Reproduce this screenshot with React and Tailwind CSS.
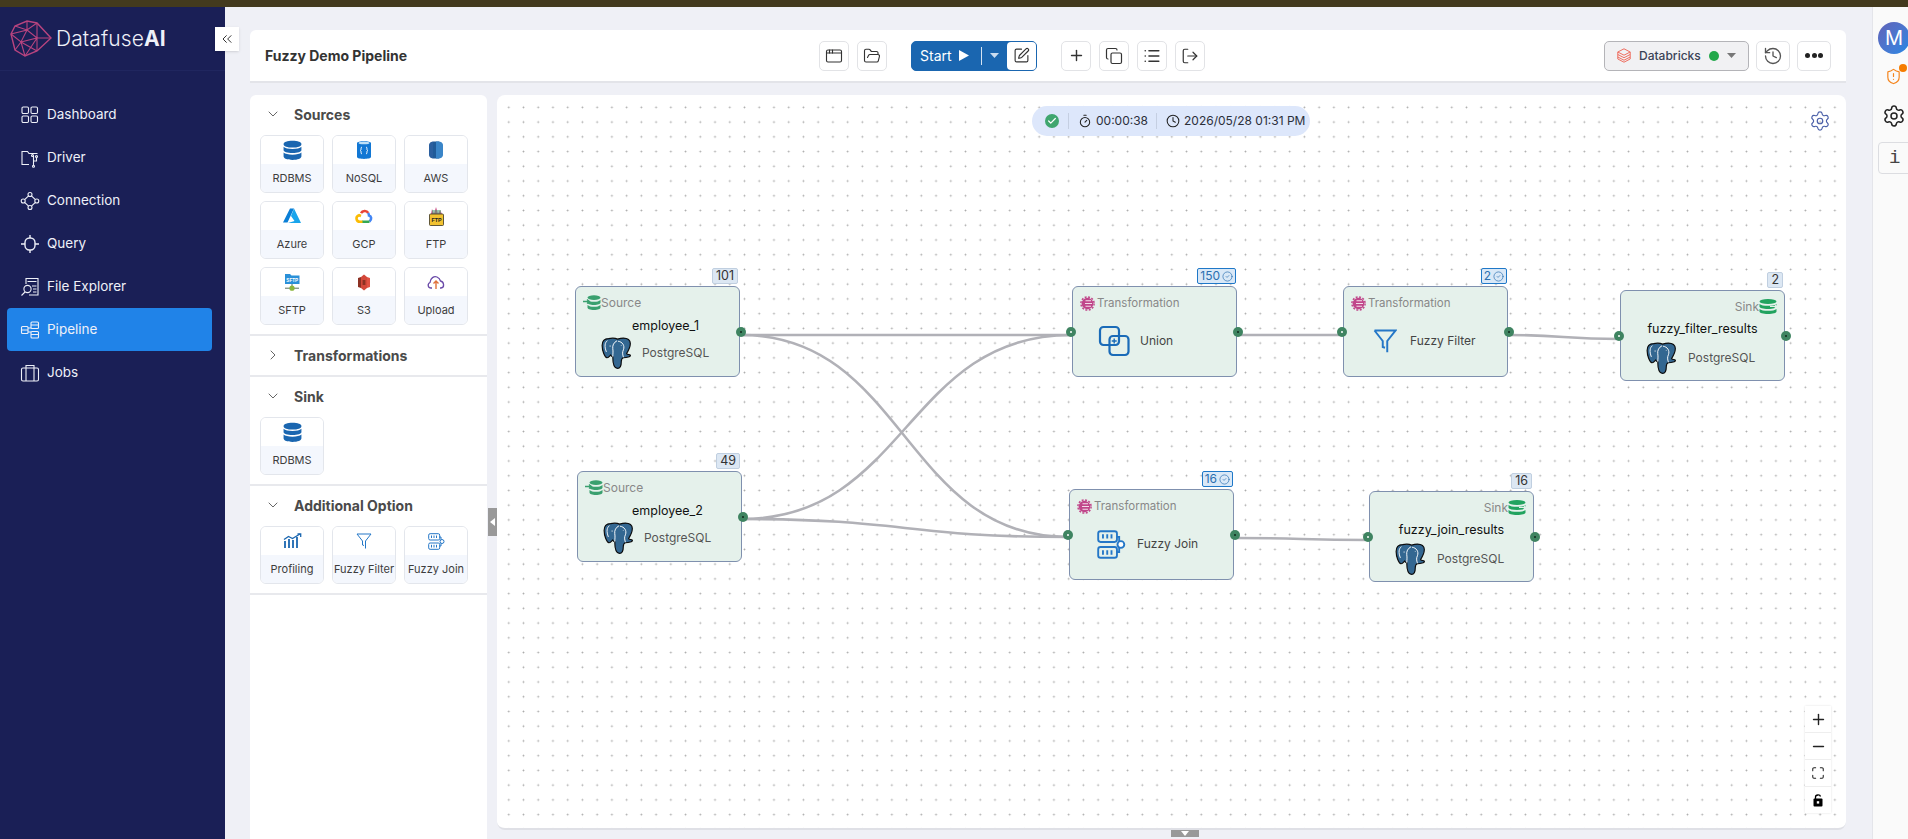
import React from "react";
import {
  ChevronsLeft, ChevronDown, ChevronRight, AppWindow, FolderOpen, SquarePen, Plus, Copy, List, LogOut,
  History, ShieldAlert, Settings, Timer, Clock, Check, Minus, Maximize, CircleCheck,
} from "lucide-react";

const BLUE = "#1a66b0";

// ---------- small drawn icons ----------
function Logo() {
  const c = "#b8447f";
  return (
    <svg width="42" height="38" viewBox="0 0 42 38" fill="none" stroke={c} strokeWidth="1.1">
      <path d="M1 14L5 6L17 1L27 3L41 18L27 31L15 36L5 30Z" strokeWidth="1.4" />
      <path d="M5 6L17 10L27 3M17 1L17 10L1 14M17 10L27 18L41 18M17 10L11 22L1 14M11 22L27 18L27 31M11 22L15 36M11 22L5 30M27 3L27 18M27 18L15 36M11 22L27 31" />
    </svg>
  );
}

const navIcons = {
  dashboard: (
    <>
      <rect x="2" y="2" width="6.5" height="6.5" rx="1.2" />
      <rect x="11" y="2" width="6.5" height="6.5" rx="1.2" />
      <rect x="2" y="11" width="6.5" height="6.5" rx="1.2" />
      <rect x="11" y="11" width="6.5" height="6.5" rx="1.2" />
    </>
  ),
  driver: (
    <>
      <path d="M9 16.5H2V3.5H7.5L9 5.5H17.5" />
      <path d="M13.5 8V18M13.5 13H16.5V9.5" />
      <circle cx="13.5" cy="18.2" r="1" />
      <circle cx="16.5" cy="8.5" r="1" />
      <circle cx="12.5" cy="7.5" r="1" />
    </>
  ),
  connection: (
    <>
      <circle cx="10" cy="3.5" r="2" />
      <circle cx="10" cy="16.5" r="2" />
      <circle cx="3.2" cy="10" r="2" />
      <circle cx="16.8" cy="10" r="2" />
      <path d="M8.6 4.9L4.6 8.6M11.4 4.9L15.4 8.6M4.6 11.4L8.6 15.1M15.4 11.4L11.4 15.1" />
    </>
  ),
  query: (
    <>
      <rect x="5" y="4" width="10" height="12" rx="4.5" strokeWidth="1.4" />
      <path d="M10 1V4M10 16V19M1 10H5M15 10H19" strokeWidth="1.4" />
    </>
  ),
  files: (
    <>
      <path d="M6 7V1.5H18V18H9" />
      <path d="M7.5 4.5H16.5M12 9H16.5M13 12H16.5M13 15H16.5" />
      <circle cx="7.5" cy="12" r="3.6" />
      <path d="M5 15L1.5 18.5" />
    </>
  ),
  pipeline: (
    <>
      <rect x="1.5" y="6.5" width="6.5" height="7" rx="1" />
      <rect x="11" y="2" width="7.5" height="6.5" rx="1" />
      <rect x="11" y="11.5" width="7.5" height="6.5" rx="1" />
      <path d="M1.5 10H8M11 5H18.5M11 14.5H18.5M8 8H11M8 12H11" />
    </>
  ),
  jobs: (
    <>
      <rect x="1.5" y="5" width="17" height="13" rx="1.5" />
      <path d="M6 5V18M14 5V18M6 5V2.5H14V5" />
    </>
  ),
};

function NavIcon({ name }) {
  return (
    <svg width="20" height="20" viewBox="0 0 20 20" fill="none" stroke="currentColor" strokeWidth="1.1">
      {navIcons[name]}
    </svg>
  );
}

function DbStack({ color = BLUE, size = 20 }) {
  return (
    <svg width={size} height={size} viewBox="0 0 20 20" fill={color}>
      <path d="M1.5 4C1.5 2 5 .8 10 .8S18.5 2 18.5 4 15 7.2 10 7.2 1.5 6 1.5 4Z" />
      <path d="M1.5 6.5C3 8 6 8.6 10 8.6S17 8 18.5 6.5V9.5C18.5 11.2 15 12.4 10 12.4S1.5 11.2 1.5 9.5Z" />
      <path d="M1.5 12C3 13.4 6 14 10 14S17 13.4 18.5 12V15.5C18.5 17.6 15 19 10 19S1.5 17.6 1.5 15.5Z" />
    </svg>
  );
}

function NoSqlIcon() {
  return (
    <svg width="16" height="20" viewBox="0 0 16 20">
      <path d="M1 3C1 .5 15 .5 15 3V17C15 19.5 1 19.5 1 17Z" fill="#1177d4" />
      <ellipse cx="8" cy="3" rx="5.5" ry="1.3" fill="#bfe0f7" />
      <path d="M6 7C4.5 7 5.5 10 4.5 10.5C5.5 11 4.5 14 6 14M10 7C11.5 7 10.5 10 11.5 10.5C10.5 11 11.5 14 10 14" fill="none" stroke="#fff" strokeWidth="1" />
    </svg>
  );
}

function AwsIcon() {
  return (
    <svg width="16" height="18" viewBox="0 0 16 18">
      <path d="M1 4C1 1.5 4 .5 5 .5V17.5C4 17.5 1 16.5 1 14Z" fill="#2b5f9f" />
      <path d="M5 .5H11V17.5H5Z" fill="#205b99" />
      <path d="M8 .5H11C12 .5 15 1.5 15 4V14C15 16.5 12 17.5 11 17.5H8Z" fill="#3a85c8" />
    </svg>
  );
}

function AzureIcon() {
  return (
    <svg width="18" height="16" viewBox="0 0 18 16">
      <path d="M7 0.5H11L4.5 14.5H0Z" fill="#0a7fd6" />
      <path d="M11 0.5L18 15H5L11.5 13L8 8Z" fill="#19a5ec" />
    </svg>
  );
}

function GcpIcon() {
  return (
    <svg width="18" height="15" viewBox="0 0 18 15" fill="none" strokeWidth="2.6">
      <path d="M6 4.2C7.5 1.5 11.5 1 13.2 4" stroke="#ea4335" />
      <path d="M13.2 4C14 5.5 14 6 14 6.5C16.5 7 17 10.5 14.5 12.5" stroke="#4285f4" />
      <path d="M14.5 12.8H7" stroke="#34a853" />
      <path d="M7.5 12.8H5C1 12.8 0.2 7.5 4 6.2L6 7" stroke="#fbbc05" />
    </svg>
  );
}

function FtpIcon() {
  return (
    <svg width="15" height="19" viewBox="0 0 15 19">
      <path d="M3 2L5 7H2ZM7 0L9 7H5ZM11 3L13 7H9Z" fill="#c94f86" />
      <rect x="3" y="3" width="9" height="5" fill="#58a27c" opacity=".6" />
      <rect x="0.5" y="7" width="14" height="11.5" rx="1" fill="#f2c230" stroke="#3a3320" strokeWidth=".8" />
      <text x="7.5" y="15" fontSize="5.4" fontWeight="700" textAnchor="middle" fontFamily="Liberation Sans, sans-serif" fill="#222">FTP</text>
    </svg>
  );
}

function SftpIcon() {
  return (
    <svg width="16" height="19" viewBox="0 0 16 19">
      <path d="M1 1H6L7.5 2.5H15.5V11H1Z" fill="#2a90d8" />
      <text x="8.2" y="8.6" fontSize="4.6" fontWeight="700" textAnchor="middle" fontFamily="Liberation Sans, sans-serif" fill="#fff">SFTP</text>
      <path d="M8 11V14M1 15.2H15" stroke="#58705f" strokeWidth="1" />
      <circle cx="8" cy="15.2" r="2.6" fill="#8cb63c" />
    </svg>
  );
}

function S3Icon() {
  return (
    <svg width="14" height="17" viewBox="0 0 14 17">
      <path d="M1 4L4 3V14L1 13Z" fill="#8c3123" />
      <path d="M13 4L10 3V14L13 13Z" fill="#e05243" />
      <path d="M4 3L7 .5L10 3V14L7 16.5L4 14Z" fill="#d3483a" />
      <rect x="5.6" y="6" width="2.8" height="5" fill="#8c3123" />
    </svg>
  );
}

function UploadIcon() {
  return (
    <svg width="18" height="15" viewBox="0 0 18 15" fill="none" strokeWidth="1.3">
      <path d="M5 13H4C1 13 0 9 3 7.5C3.4 3 7 .8 10 2C12 2.8 13 4 13.5 6C17 6.5 18 12.5 14 13H13" stroke="#6a4aa8" />
      <path d="M9 14V6M6.5 8.5L9 6L11.5 8.5" stroke="#e0713a" strokeWidth="1.4" />
    </svg>
  );
}

function ProfilingIcon() {
  return (
    <svg width="19" height="16" viewBox="0 0 19 16" fill="none" stroke={BLUE} strokeWidth="1.3">
      <path d="M2 15V8M6 15V6M10 15V7M14 15V4" strokeWidth="1.8" />
      <path d="M1 6.5L5.5 3.5L9.5 5.5L17 1" />
      <path d="M14.5 1H17.7V4" />
    </svg>
  );
}

function JoinIcon({ size = 17, w = 1 }) {
  return (
    <svg width={size} height={size} viewBox="0 0 17 17" fill="none" stroke="#2477c7" strokeWidth={w}>
      <rect x="0.7" y="0.7" width="11" height="6.3" rx="1.4" />
      <rect x="0.7" y="10" width="11" height="6.3" rx="1.4" />
      <path d="M3.5 2.5V5M6 2.5V5M8.5 2.5V5M3.5 11.8V14.5M6 11.8V14.5M8.5 11.8V14.5M11.7 4H13V13H11.7" />
      <circle cx="14" cy="8.5" r="2" fill="#fff" />
    </svg>
  );
}

function FunnelLine({ size = 16, w = 1 }) {
  return (
    <svg width={size} height={size} viewBox="0 0 16 16" fill="none" stroke="#2477c7" strokeWidth={w}>
      <path d="M1 1H15L9.5 8V15.5M1 1L6.5 8V12L8 12.5" />
    </svg>
  );
}

// postgres elephant
function Elephant() {
  return (
    <svg width="31" height="33" viewBox="0 0 29 31">
      <path d="M7 1.5C3 1.5 1 4 1 8C1 13 3.5 19 5.5 19.5C7 19.8 8 18 9 17C9.5 18 10 18.5 11 18.5C11 23 11.5 29.5 15.5 29.5C19 29.5 19 26 19 23C19 21 19.5 20 21 19.5C24 19.5 28 18.5 27.5 17C26.5 16 24.5 17 24 15.5C25.5 13 27.5 9 27.5 6C27.5 3 25 1 21 1C18.5 1 17 1.5 15.5 2C13 .8 10 .9 7 1.5Z" fill="#336791" stroke="#0d0d0d" strokeWidth="1.1" />
      <path d="M6 3.5C3.5 5 3 9 5 14M15 3.5C12 5 10.5 8 11 11C11.5 14 11 16 11 18.5M16 4C20 4.5 22.5 8 21 12C20 14 20 16 21 19M8.5 9V8M19 8V7.5" fill="none" stroke="#fff" strokeWidth=".9" />
    </svg>
  );
}

function UnionIcon() {
  return (
    <svg width="32" height="32" viewBox="0 0 32 32" fill="none" stroke="#1a6bb8" strokeWidth="2.2">
      <rect x="2" y="2" width="19" height="18" rx="3.5" />
      <rect x="11.5" y="11" width="19" height="19" rx="3.5" />
      <path d="M16.2 13.5V18.5M13.7 16H18.7" strokeWidth="1.4" />
    </svg>
  );
}

function SourceGlyph() {
  return (
    <svg width="18" height="15" viewBox="0 0 18 15" fill="#3aa06f">
      <ellipse cx="11" cy="2.6" rx="6.5" ry="2.4" />
      <path d="M4.5 5C6 6.4 8 6.8 11 6.8S16 6.4 17.5 5V7.5C17.5 9 15 10 11 10S4.5 9 4.5 7.5Z" />
      <path d="M4.5 10C6 11.4 8 11.8 11 11.8S16 11.4 17.5 10V12.5C17.5 14 15 15 11 15S4.5 14 4.5 12.5Z" />
      <path d="M0 6.5H6M4 4.5L6.5 6.5L4 8.5" fill="none" stroke="#3aa06f" strokeWidth="1.3" />
    </svg>
  );
}

function SinkGlyph() {
  return (
    <svg width="18" height="15" viewBox="0 0 18 15" fill="#22a35f">
      <ellipse cx="9" cy="2.6" rx="8.5" ry="2.5" />
      <path d="M.5 5C2 6.4 5 6.8 9 6.8S16 6.4 17.5 5V7.5C17.5 9 14 10 9 10S.5 9 .5 7.5Z" />
      <path d="M.5 10C2 11.4 5 11.8 9 11.8S16 11.4 17.5 10V12.5C17.5 14 14 15 9 15S.5 14 .5 12.5Z" />
      <path d="M11 7.5H17.5M15.5 5.5L18 7.5L15.5 9.5" fill="none" stroke="#e5f1eb" strokeWidth="1.2" />
    </svg>
  );
}

function TransformGlyph() {
  return (
    <svg width="15" height="15" viewBox="0 0 15 15" fill="none">
      <circle cx="7.5" cy="7.5" r="5.8" fill="#c0468a" />
      <circle cx="7.5" cy="7.5" r="6.6" stroke="#c0468a" strokeWidth="1.5" strokeDasharray="2 1.5" />
      <path d="M5.5 4.8H11M5 7.5H12M5.5 10.2H11" stroke="#f3dce9" strokeWidth="1.1" />
    </svg>
  );
}

function DatabricksIcon() {
  return (
    <svg width="14" height="15" viewBox="0 0 14 15" fill="none" stroke="#ee6d5f" strokeWidth="1">
      <path d="M7 .8L13.2 4L7 7.2L.8 4Z" />
      <path d="M.8 6.5L7 9.7L13.2 6.5M.8 9L7 12.2L13.2 9M.8 11L7 14.2L13.2 11" />
      <path d="M.8 4V11M13.2 4V11" />
    </svg>
  );
}

// ---------- data ----------
const navItems = [
  ["dashboard", "Dashboard"],
  ["driver", "Driver"],
  ["connection", "Connection"],
  ["query", "Query"],
  ["files", "File Explorer"],
  ["pipeline", "Pipeline"],
  ["jobs", "Jobs"],
];

const sourceCards = [
  ["RDBMS", <DbStack size={21} />],
  ["NoSQL", <NoSqlIcon />],
  ["AWS", <AwsIcon />],
  ["Azure", <AzureIcon />],
  ["GCP", <GcpIcon />],
  ["FTP", <FtpIcon />],
  ["SFTP", <SftpIcon />],
  ["S3", <S3Icon />],
  ["Upload", <UploadIcon />],
];

const optionCards = [
  ["Profiling", <ProfilingIcon />],
  ["Fuzzy Filter", <FunnelLine />],
  ["Fuzzy Join", <JoinIcon />],
];

// positions are canvas coordinates
const nodes = [
  { kind: "source", x: 78, y: 191, name: "employee_1", count: "101" },
  { kind: "source", x: 80, y: 376, name: "employee_2", count: "49" },
  { kind: "transform", x: 575, y: 191, name: "Union", count: "150", icon: <UnionIcon />, ml: "ml-[25px]", gap: "gap-[10px]" },
  { kind: "transform", x: 846, y: 191, name: "Fuzzy Filter", count: "2", icon: <FunnelLine size={24} w={1.3} />, ml: "ml-[29px]", gap: "gap-[13px]" },
  { kind: "transform", x: 572, y: 394, name: "Fuzzy Join", count: "16", icon: <JoinIcon size={29} w={1.1} />, ml: "ml-[27px]", gap: "gap-[11px]" },
  { kind: "sink", x: 1123, y: 195, name: "fuzzy_filter_results", count: "2" },
  { kind: "sink", x: 872, y: 396, name: "fuzzy_join_results", count: "16" },
];

const edges = [
  [244, 240, 574, 240],
  [244, 240, 571, 442],
  [245, 424, 574, 240],
  [245, 424, 571, 442],
  [740, 240, 844, 240],
  [1011, 240, 1122, 244],
  [738, 443, 871, 445],
];

// ---------- pieces ----------
function Sidebar() {
  return (
    <aside className="w-[225px] shrink-0 bg-[#1a1f56] text-[#eef0f8] relative">
      <div className="h-[64px] flex items-center pl-[10px] gap-[4px] border-b border-[#20265f]">
        <Logo />
        <span className="text-[21px] tracking-[0.1px] font-light">
          Datafuse<span className="font-bold">AI</span>
        </span>
      </div>
      <nav className="pt-[22px] pl-[7px] w-[212px]">
        {navItems.map(([icon, label]) => (
          <div
            key={icon}
            className={`h-[43px] flex items-center pl-[13px] gap-[7px] rounded text-[13.5px] ${
              label === "Pipeline" ? "bg-[#2083e8]" : ""
            }`}
          >
            <NavIcon name={icon} />
            {label}
          </div>
        ))}
      </nav>
      <button className="absolute left-[215px] top-[20px] w-[24px] h-[24px] bg-white shadow flex items-center justify-center text-[#333]">
        <ChevronsLeft size={16} strokeWidth={1.5} />
      </button>
    </aside>
  );
}

function ToolButton({ children }) {
  return (
    <button className="w-[30px] h-[30px] border border-[#e2e3e6] rounded-[5px] flex items-center justify-center text-[#333] bg-white">
      {children}
    </button>
  );
}

function Header() {
  return (
    <header className="h-[53px] shrink-0 bg-white rounded-t-md border-b-2 border-[#e3e4e9] flex items-center pl-[15px] pr-[15px]">
      <div className="w-[554px] text-[14px] font-bold text-[#333]">Fuzzy Demo Pipeline</div>
      <div className="flex gap-[8px]">
        <ToolButton><AppWindow size={18} strokeWidth={1.5} /></ToolButton>
        <ToolButton><FolderOpen size={18} strokeWidth={1.5} /></ToolButton>
      </div>
      <div className="ml-[24px] w-[126px] h-[30px] bg-[#1a66b0] rounded-[5px] flex items-center text-white text-[14px] overflow-hidden border border-[#1a66b0]">
        <span className="pl-[8px] w-[47px]">Start</span>
        <svg width="10" height="11" viewBox="0 0 10 11" fill="white"><path d="M0 0L10 5.5L0 11Z" /></svg>
        <span className="ml-[12px] w-px h-[18px] bg-[#d5e3f2]" />
        <svg className="ml-[8px]" width="9" height="5" viewBox="0 0 9 5" fill="#c9dcf0"><path d="M0 0H9L4.5 5Z" /></svg>
        <span className="ml-auto w-[29px] h-full bg-white rounded-l-[4px] flex items-center justify-center text-[#333]">
          <SquarePen size={17} strokeWidth={1.6} />
        </span>
      </div>
      <div className="ml-[24px] flex gap-[8px]">
        <ToolButton><Plus size={17} strokeWidth={2} /></ToolButton>
        <ToolButton><Copy size={18} strokeWidth={1.6} /></ToolButton>
        <ToolButton><List size={18} strokeWidth={2.2} /></ToolButton>
        <ToolButton><LogOut size={18} strokeWidth={1.6} /></ToolButton>
      </div>
      <div className="ml-auto flex items-center gap-[7px]">
        <div className="w-[145px] h-[30px] bg-[#f1f1f3] border border-[#b4b4b8] rounded-[5px] flex items-center pl-[12px] text-[12px] text-[#3a4256] font-medium">
          <DatabricksIcon />
          <span className="ml-[8px]">Databricks</span>
          <span className="ml-[8px] w-[10px] h-[10px] rounded-full bg-[#22a84a]" />
          <svg className="ml-[8px]" width="9" height="5" viewBox="0 0 9 5" fill="#777"><path d="M0 0H9L4.5 5Z" /></svg>
        </div>
        <button className="w-[34px] h-[30px] border border-[#e2e3e6] rounded-[5px] flex items-center justify-center text-[#555]">
          <History size={20} strokeWidth={1.6} />
        </button>
        <button className="w-[34px] h-[30px] border border-[#e2e3e6] rounded-[5px] flex items-center justify-center gap-[1.5px]">
          <span className="w-[5px] h-[5px] rounded-full bg-[#222]" />
          <span className="w-[5px] h-[5px] rounded-full bg-[#222]" />
          <span className="w-[5px] h-[5px] rounded-full bg-[#222]" />
        </button>
      </div>
    </header>
  );
}

function Card({ label, icon }) {
  return (
    <div className="w-[64px] h-[58px] border border-[#e3e6ec] rounded-[6px] overflow-hidden flex flex-col">
      <div className="h-[28px] flex items-center justify-center bg-white">{icon}</div>
      <div className="flex-1 bg-[#f4f7fd] flex items-center justify-center text-[11px] text-[#3d3d3d] whitespace-nowrap">
        {label}
      </div>
    </div>
  );
}

function Section({ title, open = true, cards = [], height }) {
  return (
    <section className={`border-b-2 border-[#e8e9ed] px-[10px] ${height}`}>
      <div className="h-[40px] pb-[2px] flex items-center text-[14px] font-bold text-[#4a4a4a]">
        {open ? (
          <ChevronDown size={16} strokeWidth={1.5} className="ml-[5px] text-[#666]" />
        ) : (
          <ChevronRight size={16} strokeWidth={1.5} className="ml-[5px] text-[#666]" />
        )}
        <span className="ml-[13px]">{title}</span>
      </div>
      {cards.length > 0 && (
        <div className="grid grid-cols-[64px_64px_64px] gap-x-[8px] gap-y-[8px]">
          {cards.map(([label, icon]) => (
            <Card key={label} label={label} icon={icon} />
          ))}
        </div>
      )}
    </section>
  );
}

function LeftPanel() {
  return (
    <div className="w-[237px] shrink-0 bg-white rounded-t-md relative">
      <Section title="Sources" cards={sourceCards} height="h-[241px]" />
      <Section title="Transformations" open={false} height="h-[41px]" />
      <Section title="Sink" cards={[["RDBMS", <DbStack size={21} />]]} height="h-[109px]" />
      <Section title="Additional Option" cards={optionCards} height="h-[109px]" />
      <div className="absolute left-[238px] top-[413px] w-[9px] h-[28px] bg-[#999] flex items-center justify-center">
        <svg width="5" height="8" viewBox="0 0 5 8" fill="#fff"><path d="M5 0V8L0 4Z" /></svg>
      </div>
    </div>
  );
}

function Port({ side, dark }) {
  return (
    <span
      className={`absolute top-1/2 -translate-y-1/2 w-[10px] h-[10px] rounded-full bg-[#3f8461] flex items-center justify-center ${
        side === "left" ? "left-[-7px]" : "right-[-7px]"
      }`}
    >
      <span className={`w-[2px] h-[2px] rounded-full ${dark ? "bg-[#10281c]" : "bg-white"}`} />
    </span>
  );
}

function Badge({ count, checked }) {
  if (checked) {
    return (
      <div className="absolute right-[0px] top-[-19px] h-[16px] px-[2px] bg-[#d9e8f7] border border-[#1f78c8] rounded-[2px] flex items-center gap-[2px] text-[12px] leading-none text-[#2a6fb0]">
        <span>{count}</span>
        <CircleCheck size={11} strokeWidth={1.5} />
      </div>
    );
  }
  return (
    <div className="absolute right-[1px] top-[-19px] h-[16px] px-[3px] bg-[#dce7f3] border border-[#c0cfe0] rounded-[2px] flex items-center text-[12.5px] leading-none text-[#333]">
      {count}
    </div>
  );
}

function FlowNode({ node }) {
  const { kind, name, count, icon, ml, gap } = node;
  return (
    <div
      className="absolute w-[165px] h-[91px] bg-[#e5f1eb] border-[1.5px] border-[#7f90ae] rounded-[6px]"
      style={{ left: node.x, top: node.y }}
    >
      <Badge count={count} checked={kind === "transform"} />
      {kind !== "source" && <Port side="left" />}
      {kind === "source" && (
        <>
          <div className="flex items-center pl-[7px] pt-[8px] text-[12px] leading-[15px] text-[#888]">
            <SourceGlyph />
            <span>Source</span>
          </div>
          <div className="text-center text-[12.5px] text-[#111] mt-[7px] pl-[16px]">{name}</div>
          <div className="flex items-center pl-[25px] gap-[10px] mt-[1px] text-[12px] text-[#555]">
            <Elephant />
            <span>PostgreSQL</span>
          </div>
        </>
      )}
      {kind === "sink" && (
        <>
          <div className="flex items-center justify-end pr-[7px] pt-[8px] text-[12px] leading-[15px] text-[#888]">
            <span>Sink</span>
            <SinkGlyph />
          </div>
          <div className="text-center text-[12.5px] text-[#111] mt-[6px]">{name}</div>
          <div className="flex items-center pl-[25px] gap-[11px] mt-[3px] text-[12px] text-[#555]">
            <Elephant />
            <span>PostgreSQL</span>
          </div>
        </>
      )}
      {kind === "transform" && (
        <>
          <div className="flex items-center gap-[2px] pl-[7px] pt-[9px] text-[11.5px] leading-[15px] text-[#888]">
            <TransformGlyph />
            <span>Transformation</span>
          </div>
          <div className={`flex items-center h-[34px] mt-[13px] text-[12px] text-[#444] ${ml} ${gap}`}>
            {icon}
            <span>{name}</span>
          </div>
        </>
      )}
      <Port side="right" dark />
    </div>
  );
}

function edgePath([x1, y1, x2, y2]) {
  const mx = (x1 + x2) / 2;
  return `M${x1} ${y1}C${mx} ${y1} ${mx} ${y2} ${x2} ${y2}`;
}

function Canvas() {
  return (
    <div className="flex-1 mb-[9px] relative rounded-lg border-b-2 border-[#dfe0e6] overflow-visible bg-white bg-[radial-gradient(circle,#a9a9a9_0.8px,transparent_1.1px)] bg-[size:14.74px_14.74px] bg-[position:4.4px_5px]">
      <svg className="absolute inset-0 w-full h-full pointer-events-none" fill="none" stroke="#b1b1b7" strokeWidth="2.6">
        {edges.map((e, i) => (
          <path key={i} d={edgePath(e)} />
        ))}
      </svg>

      {nodes.map((n) => (
        <FlowNode key={n.name} node={n} />
      ))}

      {/* run status */}
      <div className="absolute left-[535px] top-[11px] w-[278px] h-[30px] bg-[#dde7fb] rounded-full flex items-center pl-[13px] text-[12px] text-[#2b2f3a]">
        <span className="w-[14px] h-[14px] rounded-full bg-[#3fa66f] flex items-center justify-center text-white">
          <Check size={10} strokeWidth={3} />
        </span>
        <span className="ml-[9px] w-px h-[16px] bg-[#c5cfe2]" />
        <Timer size={14} strokeWidth={1.8} className="ml-[9px] text-[#222]" />
        <span className="ml-[4px]">00:00:38</span>
        <span className="ml-[8px] w-px h-[16px] bg-[#c5cfe2]" />
        <Clock size={14} strokeWidth={1.8} className="ml-[9px] text-[#222]" />
        <span className="ml-[4px]">2026/05/28 01:31 PM</span>
      </div>

      <Settings size={22} strokeWidth={1.3} className="absolute right-[15px] top-[15px] text-[#4a5fa8]" />

      {/* zoom controls */}
      <div className="absolute right-[15px] bottom-[15px] w-[26px] bg-white shadow-[0_0_2px_rgba(0,0,0,0.12)] flex flex-col text-[#222]">
        <div className="h-[27px] border-b border-[#eee] flex items-center justify-center"><Plus size={17} strokeWidth={2} /></div>
        <div className="h-[27px] border-b border-[#eee] flex items-center justify-center"><Minus size={17} strokeWidth={2} /></div>
        <div className="h-[27px] border-b border-[#eee] flex items-center justify-center"><Maximize size={14} strokeWidth={1.8} /></div>
        <div className="h-[26px] flex items-center justify-center">
          <svg width="10" height="13" viewBox="0 0 10 13">
            <path d="M2.5 5V3C2.5 .5 7 .3 7.5 2.5" fill="none" stroke="#000" strokeWidth="1.3" />
            <rect x="0.5" y="4.5" width="9" height="8" rx="1" fill="#000" />
            <rect x="3.8" y="7.2" width="2.4" height="2.4" fill="#fff" />
          </svg>
        </div>
      </div>

      <div className="absolute left-[674px] bottom-[-9px] w-[28px] h-[7px] bg-[#999] flex items-center justify-center">
        <svg width="8" height="5" viewBox="0 0 8 5" fill="#fff"><path d="M0 0H8L4 5Z" /></svg>
      </div>
    </div>
  );
}

function RightRail() {
  return (
    <aside className="w-[36px] shrink-0 bg-[#fafafa] border-l border-[#e4e5ea] overflow-hidden pt-[15px] pl-[5px] flex flex-col">
      <div className="w-[32px] h-[32px] rounded-full bg-gradient-to-br from-[#5f63b8] to-[#1e88e5] text-white text-[20px] flex items-center justify-center shrink-0">
        M
      </div>
      <div className="relative mt-[14px] ml-[7px] w-[16px] h-[18px] text-[#f5861f]">
        <ShieldAlert size={17} strokeWidth={1.7} />
        <span className="absolute right-[-6px] top-[-4px] w-[8px] h-[8px] rounded-full bg-[#f57c00]" />
      </div>
      <Settings size={24} strokeWidth={1.5} className="mt-[18px] ml-[4px] text-[#222] shrink-0" />
      <div className="mt-[14px] w-[34px] h-[32px] shrink-0 border border-[#dcdde1] rounded-[4px] flex items-center pl-[10px] text-[19px] text-[#444] font-['Liberation_Mono',monospace]">
        i
      </div>
    </aside>
  );
}

export default function App() {
  return (
    <div className="h-[839px] w-full overflow-hidden flex flex-col bg-[#eff0f6] font-['Inter',sans-serif]">
      <div className="h-[7px] shrink-0 bg-[#433a1e]" />
      <div className="flex-1 flex min-h-0">
        <Sidebar />
        <main className="flex-1 min-w-0 pl-[25px] pr-[26px] pt-[23px] flex flex-col gap-[12px]">
          <Header />
          <div className="flex-1 min-h-0 flex gap-[10px]">
            <LeftPanel />
            <Canvas />
          </div>
        </main>
        <RightRail />
      </div>
    </div>
  );
}
